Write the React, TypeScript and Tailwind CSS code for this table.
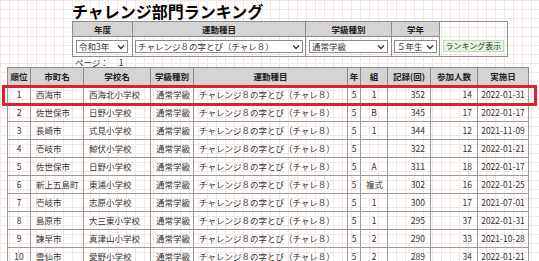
import React from "react";

const ROWS = [
  { rank: 1, city: "西海市", school: "西海北小学校", cls: "1", rec: 352, num: 14, date: "2022-01-31" },
  { rank: 2, city: "佐世保市", school: "日野小学校", cls: "B", rec: 345, num: 17, date: "2022-01-17" },
  { rank: 3, city: "長崎市", school: "式見小学校", cls: "1", rec: 344, num: 12, date: "2021-11-09" },
  { rank: 4, city: "壱岐市", school: "鯨伏小学校", cls: "", rec: 322, num: 12, date: "2022-01-21" },
  { rank: 5, city: "佐世保市", school: "日野小学校", cls: "A", rec: 311, num: 18, date: "2022-01-17" },
  { rank: 6, city: "新上五島町", school: "東浦小学校", cls: "複式", rec: 302, num: 16, date: "2022-01-25" },
  { rank: 7, city: "壱岐市", school: "志原小学校", cls: "1", rec: 300, num: 17, date: "2021-07-01" },
  { rank: 8, city: "島原市", school: "大三東小学校", cls: "1", rec: 295, num: 37, date: "2022-01-31" },
  { rank: 9, city: "諫早市", school: "真津山小学校", cls: "2", rec: 290, num: 33, date: "2021-10-28" },
  { rank: 10, city: "雲仙市", school: "愛野小学校", cls: "2", rec: 289, num: 34, date: "2022-01-21" },
];

const EVENT = "チャレンジ８の字とび（チャレ８）";

// fake select box, the native one draws a different arrow
const Select = ({ label, w }: { label: string; w: string }) => (
  <div className={`flex h-[13px] items-center justify-between border border-[#8a8a8a] bg-white pl-[2px] pr-[2px] ${w}`}>
    <span className="whitespace-nowrap leading-none">{label}</span>
    <svg width="8" height="6" viewBox="0 0 8 6" className="shrink-0">
      <path d="M1 1.5 L4 4.5 L7 1.5" fill="none" stroke="#333" strokeWidth="1.3" />
    </svg>
  </div>
);

export default function App() {
  const th = "border border-[#8c8c8c] bg-[#d4d4d4] font-bold text-center text-[#222]";
  const td = "border border-[#9a9a9a] px-[5px] whitespace-nowrap";

  return (
    <div
      className="relative h-[261px] w-[539px] overflow-hidden bg-white bg-[linear-gradient(to_right,#f3e7e3_1px,transparent_1px),linear-gradient(to_bottom,#f3e7e3_1px,transparent_1px)] bg-[size:9px_9px] text-[8.5px] text-[#333]"
      style={{ fontFamily: '"Noto Sans CJK JP", "Noto Sans", sans-serif' }}
    >
      <h1 className="ml-[72px] h-[21px] pt-[1px] text-[16px] font-bold leading-[20px] text-black">
        チャレンジ部門ランキング
      </h1>

      {/* search form */}
      <table className="ml-[72px] table-fixed border-collapse border border-[#8c8c8c]">
        <colgroup>
          <col className="w-[60px]" />
          <col className="w-[171px]" />
          <col className="w-[86px]" />
          <col className="w-[48px]" />
          <col className="w-[68px]" />
        </colgroup>
        <tbody>
          <tr className="h-[15px]">
            <th className={th}>年度</th>
            <th className={th}>運動種目</th>
            <th className={th}>学級種別</th>
            <th className={th}>学年</th>
            <td rowSpan={2} className="border border-[#8c8c8c] px-[3px] pb-[4px] align-bottom">
              <div className="flex h-[12px] items-center justify-center border border-[#bfe0bf] bg-[#e2f4e0] text-[8px] leading-none text-[#333]">
                ランキング表示
              </div>
            </td>
          </tr>
          <tr className="h-[20px]">
            <td className="border border-[#8c8c8c] px-[3px]">
              <Select label="令和3年" w="w-[52px]" />
            </td>
            <td className="border border-[#8c8c8c] px-[2px]">
              <Select label={EVENT} w="w-[168px]" />
            </td>
            <td className="border border-[#8c8c8c] px-[3px]">
              <Select label="通常学級" w="w-[79px]" />
            </td>
            <td className="border border-[#8c8c8c] px-[2px]">
              <Select label="５年生" w="w-[43px]" />
            </td>
          </tr>
        </tbody>
      </table>

      <div className="ml-[75px] flex h-[10px] items-center gap-[10px] leading-none">
        <span>ページ：</span>
        <span>1</span>
      </div>

      {/* ranking */}
      <table className="ml-[7px] w-[521px] table-fixed border-collapse border border-[#8c8c8c]">
        <colgroup>
          <col className="w-[23px]" />
          <col className="w-[53px]" />
          <col className="w-[67px]" />
          <col className="w-[43px]" />
          <col className="w-[154px]" />
          <col className="w-[13px]" />
          <col className="w-[27px]" />
          <col className="w-[43px]" />
          <col className="w-[47px]" />
          <col className="w-[51px]" />
        </colgroup>
        <thead>
          <tr className="h-[18px]">
            <th className={th}>順位</th>
            <th className={th}>市町名</th>
            <th className={th}>学校名</th>
            <th className={th}>学級種別</th>
            <th className={th}>運動種目</th>
            <th className={th}>年</th>
            <th className={th}>組</th>
            <th className={th}>記録(回)</th>
            <th className={th}>参加人数</th>
            <th className={th}>実施日</th>
          </tr>
        </thead>
        <tbody>
          {ROWS.map((r) => (
            <tr key={r.rank} className="h-[18px]">
              <td className={`${td} text-center`}>{r.rank}</td>
              <td className={td}>{r.city}</td>
              <td className={td}>{r.school}</td>
              <td className={td}>通常学級</td>
              <td className={td}>{EVENT}</td>
              <td className={`${td} !px-0 text-center`}>5</td>
              <td className={`${td} text-center`}>{r.cls}</td>
              <td className={`${td} text-right`}>{r.rec}</td>
              <td className={`${td} text-right`}>{r.num}</td>
              <td className={`${td} !px-[3px] text-center`}>{r.date}</td>
            </tr>
          ))}
        </tbody>
      </table>

      {/* red highlight around first place */}
      <div className="pointer-events-none absolute left-[2px] top-[85px] h-[21px] w-[535px] border-[3px] border-[#e0202a]" />
    </div>
  );
}
